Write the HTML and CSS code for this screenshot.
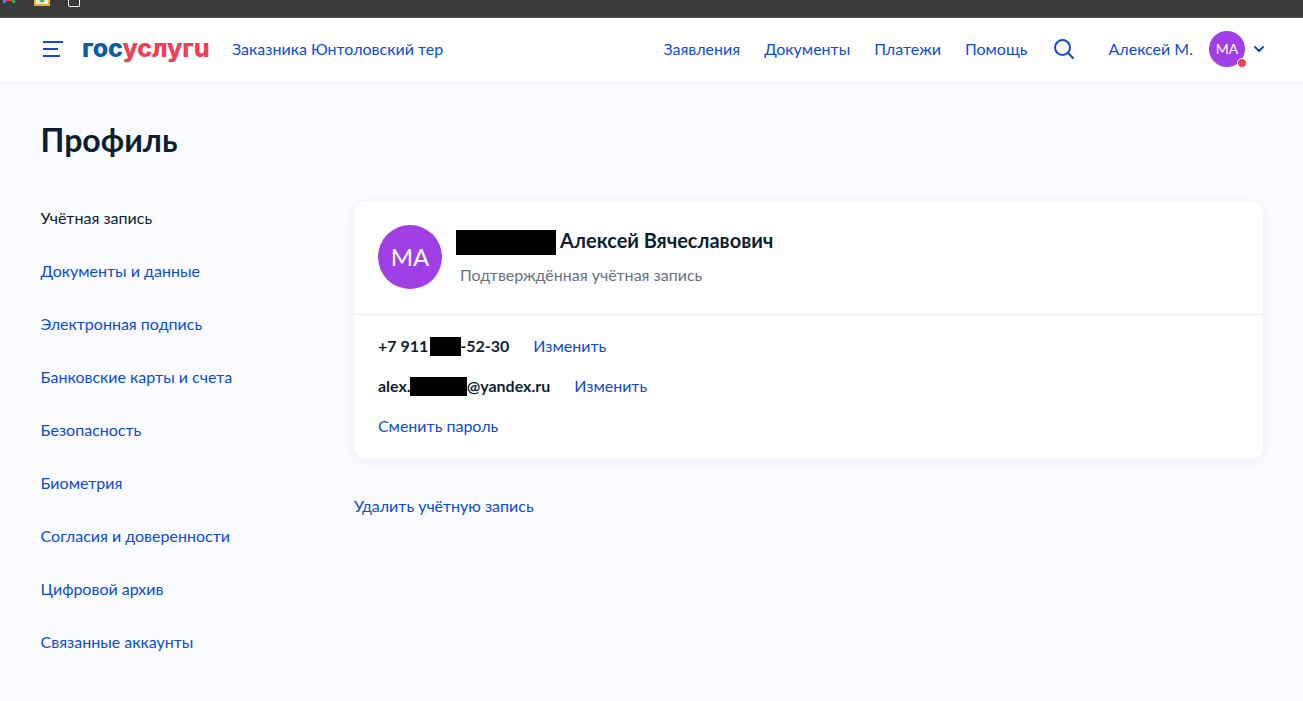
FILE: index.html
```html
<!DOCTYPE html>
<html lang="ru">

<head>
    <meta charset="UTF-8">
    <title>Профиль</title>
    <link rel="stylesheet" href="styles.css">
</head>

<body>
    <div class="browser-bar">
        <svg class="tab-icon gmail" width="16" height="4" viewBox="0 0 16 4">
            <rect x="2" y="0" width="3" height="3" fill="#4285f4"/>
            <rect x="5" y="0" width="6" height="1" fill="#ea4335"/>
            <rect x="11" y="0" width="3" height="3" fill="#34a853"/>
        </svg>
        <svg class="tab-icon photo" width="16" height="6" viewBox="0 0 16 6">
            <rect x="0" y="0" width="16" height="6" fill="#f0b323"/>
            <rect x="2" y="0" width="12" height="4" fill="#e8efe4"/>
            <circle cx="8" cy="0" r="2.5" fill="#6aa56a"/>
        </svg>
        <span class="tab-icon file"></span>
    </div>

    <header class="header">
        <a class="burger" href="#"><span></span><span></span><span></span></a>
        <a class="logo" href="#"><span class="logo-blue">гос</span><span class="logo-red">услугu</span></a>
        <a class="location" href="#">Заказника Юнтоловский тер</a>
        <nav class="nav">
            <a href="#">Заявления</a>
            <a href="#">Документы</a>
            <a href="#">Платежи</a>
            <a href="#">Помощь</a>
        </nav>
        <a class="search" href="#">
            <svg width="20" height="20" viewBox="0 0 20 20" fill="none" stroke="#0d4cd3" stroke-width="2" stroke-linecap="round">
                <circle cx="8.5" cy="8.5" r="7.5"/>
                <path d="M14 14L19 19"/>
            </svg>
        </a>
        <a class="user-name" href="#">Алексей М.</a>
        <div class="user-avatar">МА<span class="dot"></span></div>
        <svg class="chevron" width="12" height="8" viewBox="0 0 12 8" fill="none" stroke="#0b4db5" stroke-width="2" stroke-linecap="round" stroke-linejoin="round">
            <path d="M2 2L6 6L10 2"/>
        </svg>
    </header>

    <main class="page">
        <h1 class="title">Профиль</h1>
        <div class="columns">
            <ul class="side-menu">
                <li class="current">Учётная запись</li>
                <li><a href="#">Документы и данные</a></li>
                <li><a href="#">Электронная подпись</a></li>
                <li><a href="#">Банковские карты и счета</a></li>
                <li><a href="#">Безопасность</a></li>
                <li><a href="#">Биометрия</a></li>
                <li><a href="#">Согласия и доверенности</a></li>
                <li><a href="#">Цифровой архив</a></li>
                <li><a href="#">Связанные аккаунты</a></li>
            </ul>
            <section class="content">
                <div class="card">
                    <div class="card-top">
                        <div class="big-avatar">МА</div>
                        <div class="person">
                            <div class="person-name"><span class="hidden-data name-mask"></span><span class="name-text">Алексей Вячеславович</span></div>
                            <div class="person-status">Подтверждённая учётная запись</div>
                        </div>
                    </div>
                    <div class="card-bottom">
                        <div class="contact">
                            <b>+7 911<span class="hidden-data phone-mask"></span>-52-30</b>
                            <a href="#">Изменить</a>
                        </div>
                        <div class="contact">
                            <b>alex.<span class="hidden-data mail-mask"></span>@yandex.ru</b>
                            <a href="#">Изменить</a>
                        </div>
                        <div class="contact">
                            <a class="no-gap" href="#">Сменить пароль</a>
                        </div>
                    </div>
                </div>
                <a class="delete-link" href="#">Удалить учётную запись</a>
            </section>
        </div>
    </main>
</body>

</html>
```

FILE: styles.css
```css
* {
    box-sizing: border-box;
}

html,
body {
    height: 100%;
}

body {
    margin: 0;
    padding: 0;
    display: flex;
    flex-direction: column;
    overflow: hidden;
    background: #f9fbff;
    color: #0b1f33;
    font-family: "Lato", "Liberation Sans", sans-serif;
    font-size: 16px;
    line-height: 24px;
}

a {
    color: #0d4cd3;
    text-decoration: none;
}

.browser-bar {
    flex: none;
    height: 18px;
    display: flex;
    align-items: flex-start;
    background: #3b3b3b;
    border-bottom: 1px solid #555;
}

.tab-icon {
    display: block;
    flex: none;
}

.gmail {
    margin-left: 1px;
}

.photo {
    margin-left: 17px;
}

.file {
    width: 12px;
    height: 7px;
    margin-left: 18px;
    border: 1px solid #fff;
    border-top: 0;
    border-radius: 0 0 2px 2px;
}

.header {
    flex: none;
    height: 65px;
    display: flex;
    align-items: center;
    padding: 0 38px 2px 43px;
    background: #fff;
    border-bottom: 1px solid #eef2f8;
}

.burger {
    width: 20px;
    height: 16px;
    display: flex;
    flex-direction: column;
    justify-content: space-between;
    margin-right: 19px;
}

.burger span {
    display: block;
    height: 2px;
    background: #0d4cd3;
}

.burger span:nth-child(1) {
    width: 20px;
}

.burger span:nth-child(2) {
    width: 15px;
}

.burger span:nth-child(3) {
    width: 17px;
}

.logo {
    font-family: "Inter", "Noto Sans", sans-serif;
    font-size: 25px;
    line-height: 28px;
    font-weight: 800;
    letter-spacing: -0.1px;
    width: 127px;
    margin-right: 23px;
    margin-top: -3px;
    white-space: nowrap;
}

.logo-blue {
    color: #0b5ca8;
}

.logo-red {
    color: #ee3f58;
}

.nav {
    margin-left: auto;
    display: flex;
    gap: 24px;
}

.search {
    display: block;
    width: 20px;
    height: 20px;
    margin-left: 27px;
    margin-right: 34px;
}

.user-avatar {
    position: relative;
    width: 36px;
    height: 36px;
    margin-left: 16px;
    border-radius: 50%;
    background: #a03fe5;
    color: #fff;
    font-size: 14px;
    line-height: 36px;
    text-align: center;
}

.dot {
    position: absolute;
    right: -2px;
    bottom: -1px;
    width: 10px;
    height: 10px;
    border-radius: 50%;
    background: #ee3f58;
    border: 1px solid #fff;
}

.chevron {
    margin-left: 8px;
}

.page {
    flex: 1;
    padding: 35px 40px 0 40.6px;
}

.title {
    margin: 0 0 40px;
    font-size: 32px;
    line-height: 44px;
    font-weight: 700;
}

.columns {
    display: flex;
}

.side-menu {
    width: 313.4px;
    margin: 0;
    padding: 4px 0 0;
    list-style: none;
    display: flex;
    flex-direction: column;
    gap: 29px;
}

.current {
    color: #0b1f33;
}

.content {
    flex: 1;
}

.card {
    background: #fff;
    border-radius: 12px;
    box-shadow: 0 2px 12px rgba(11, 31, 51, 0.06);
}

.card-top {
    height: 113px;
    display: flex;
    padding: 23px 24px;
    border-bottom: 1px solid #e3ebf5;
}

.big-avatar {
    width: 64px;
    height: 64px;
    border-radius: 50%;
    background: #a03fe5;
    color: #fff;
    font-size: 24px;
    line-height: 64px;
    text-align: center;
    flex: none;
}

.person {
    margin-left: 14px;
    padding-top: 4px;
}

.person-name {
    display: flex;
    align-items: center;
    height: 26px;
    font-size: 20px;
    font-weight: 700;
}

.name-text {
    padding-bottom: 4px;
}

.hidden-data {
    display: inline-block;
    background: #000;
}

.name-mask {
    width: 100px;
    height: 25px;
    margin-right: 4px;
}

.person-status {
    margin-top: 8px;
    margin-left: 4px;
    color: #66727f;
}

.card-bottom {
    padding: 19px 24px 21px;
    display: flex;
    flex-direction: column;
    gap: 16px;
}

.contact {
    display: flex;
    align-items: center;
}

.contact b {
    display: flex;
    align-items: center;
    white-space: pre;
}

.contact a {
    margin-left: 24px;
}

.contact a.no-gap {
    margin-left: 0;
}

.phone-mask {
    width: 31px;
    height: 19px;
    margin-left: 2px;
    margin-right: -1px;
}

.mail-mask {
    width: 57px;
    height: 19px;
    margin-left: -1px;
}

.delete-link {
    display: block;
    margin-top: 35px;
}
```
